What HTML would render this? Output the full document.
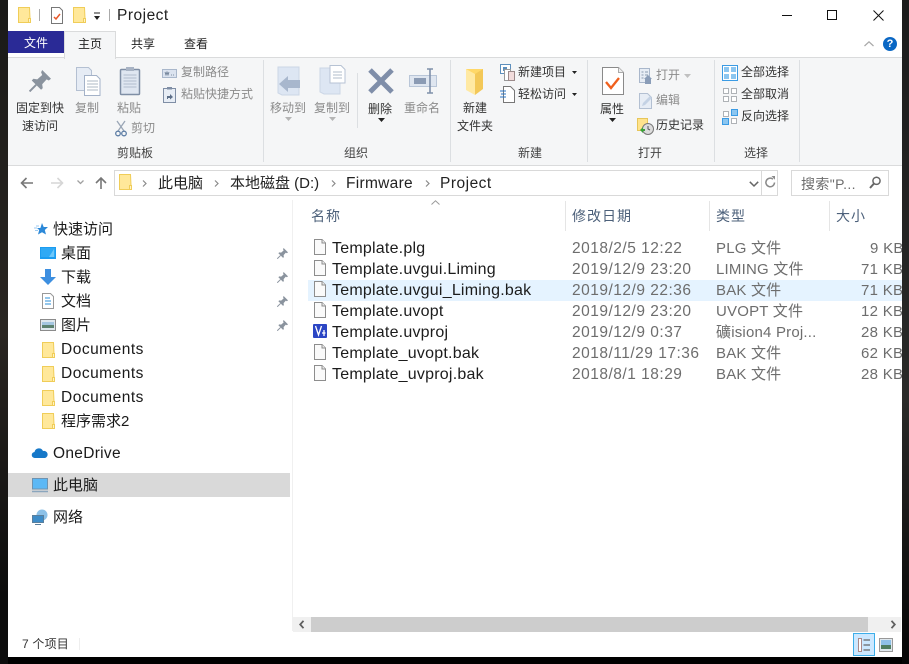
<!DOCTYPE html>
<html><head><meta charset="utf-8"><style>
*{box-sizing:border-box}
html,body{margin:0;padding:0;width:909px;height:664px;overflow:hidden;background:#000}
body{position:relative;font-family:"Liberation Sans","Noto Sans CJK SC",sans-serif;color:#222}
#bgl{position:absolute;left:0;top:0;width:8px;height:664px;background:linear-gradient(#1a1a18,#2a2622 50%,#0c0c0c 90%);z-index:10}
#bgr{position:absolute;right:0;top:0;width:7px;height:664px;background:linear-gradient(#1c1c1c,#2a2a28 60%,#050505);z-index:10}
#w{position:absolute;left:8px;top:0;width:894px;height:657px;background:#fff}
.a{position:absolute}
.t{position:absolute;white-space:nowrap;line-height:18px;font-size:12px}
.c{text-align:center}
.d{color:#8b8b8b}
.n{font-size:15px;color:#1a1a1a}
.l{font-size:15.5px;letter-spacing:.5px}
.f{font-size:16px;color:#1c1c1c;letter-spacing:.22px}
.g{font-size:15.5px;color:#6d6d6d;letter-spacing:.5px}
.y{font-size:15px;color:#6d6d6d;letter-spacing:.2px}
.z{font-size:15px;color:#6d6d6d;letter-spacing:.3px}
.h{font-size:14px;color:#4c607a;letter-spacing:1px}
.b{font-size:15px;color:#222}
svg{position:absolute;overflow:visible}
.sep{position:absolute;width:1px;background:#dcdfe2}
</style></head><body>
<div id="bgl"></div><div id="bgr"></div>
<div id="w"></div>
<svg width="0" height="0" style="position:absolute"><defs>
<symbol id="fo" viewBox="0 0 13 16"><path d="M.5.5h11l.5 11v4H.5z" fill="#ffe89a" stroke="#f0cd58"/><path d="M10.500 11.500h2v4h-2z" fill="#fff3c6" stroke="#f0cd58"/></symbol>
<symbol id="fi" viewBox="0 0 12 16"><path d="M.5.5h7.500l3.500 3.500v11.500H.5z" fill="#fafafa" stroke="#8d8d8d"/><path d="M8 .5v3.500h3.500" fill="#eee" stroke="#8d8d8d"/></symbol>
<symbol id="pin" viewBox="0 0 20 20"><path d="M12 0L20 8 18 9.500 16 8.500 12 13 12.500 16.500 11 18 2.500 9.500 4 8 7.500 8.500 12 4.500 11 2z" fill="#8a939e"/><path d="M6.500 13.500L.5 19.500" stroke="#8a939e" stroke-width="1.800"/></symbol>
</defs></svg>

<!-- title bar -->
<svg style="left:18px;top:7px" width="13" height="16"><use href="#fo"/></svg>
<div class="a" style="left:39px;top:9px;width:1px;height:12px;background:#aaa"></div>
<svg style="left:51px;top:7px" width="12" height="17"><path d="M.5.5h8l3 3v13H.5z" fill="#fff" stroke="#777"/><path d="M3 10l2 2 4-5" fill="none" stroke="#e8582a" stroke-width="1.500"/></svg>
<svg style="left:73px;top:7px" width="13" height="16"><use href="#fo"/></svg>
<svg style="left:93px;top:13px" width="8" height="8"><path d="M1 0h6" stroke="#222"/><path d="M1 3h6L4 7z" fill="#222"/></svg>
<div class="a" style="left:109px;top:9px;width:1px;height:12px;background:#aaa"></div>
<div class="t" style="left:117px;top:7px;font-size:15.500px;color:#222;letter-spacing:.5px">Project</div>
<div class="a" style="left:782px;top:15px;width:10px;height:1px;background:#111"></div>
<div class="a" style="left:827px;top:10px;width:10px;height:10px;border:1px solid #111"></div>
<svg style="left:873px;top:10px" width="11" height="11"><path d="M.5.5l10 10M10.500.5l-10 10" stroke="#111" fill="none"/></svg>

<!-- tabs -->
<div class="a" style="left:8px;top:31px;width:56px;height:22px;background:#2a2a96"></div>
<div class="t c" style="left:8px;top:34px;width:56px;color:#fff">文件</div>
<div class="a" style="left:64px;top:31px;width:52px;height:28px;background:#f5f6f7;border:1px solid #dadbdc;border-bottom:0;z-index:2"></div>
<div class="t c" style="left:64px;top:35px;width:52px;z-index:3">主页</div>
<div class="t" style="left:131px;top:35px">共享</div>
<div class="t" style="left:184px;top:35px">查看</div>
<svg style="left:864px;top:41px" width="10" height="6"><path d="M.5 5L5 .8 9.500 5" fill="none" stroke="#a8a8a8" stroke-width="1.200"/></svg>
<div class="a" style="left:883px;top:37px;width:14px;height:14px;border-radius:50%;background:#0a67c4;color:#fff;font:bold 11px/14px 'Liberation Sans',sans-serif;text-align:center">?</div>

<!-- ribbon -->
<div class="a" style="left:8px;top:57px;width:894px;height:109px;background:#f5f6f7;border-top:1px solid #dadbdc;border-bottom:1px solid #dadbdc"></div>
<div class="sep" style="left:263px;top:60px;height:102px"></div>
<div class="sep" style="left:357px;top:73px;height:55px"></div>
<div class="sep" style="left:450px;top:60px;height:102px"></div>
<div class="sep" style="left:587px;top:60px;height:102px"></div>
<div class="sep" style="left:714px;top:60px;height:102px"></div>
<div class="sep" style="left:799px;top:60px;height:102px"></div>

<svg style="left:29px;top:70px" width="22" height="22"><use href="#pin" width="22" height="22"/></svg>
<div class="t c" style="left:10px;top:99px;width:60px;color:#333">固定到快</div>
<div class="t c" style="left:10px;top:117px;width:60px;color:#333">速访问</div>

<svg style="left:76px;top:67px" width="25" height="29"><path d="M.5.5h12l3 3v20H.5z" fill="#e6ecf5" stroke="#b4c0d2"/><path d="M8.500 8.500h12l3.500 3.500v16.500H8.500z" fill="#fff" stroke="#a4b2c8"/><path d="M11 14h11M11 17h11M11 20h11M11 23h11" stroke="#aeb8c6"/></svg>
<div class="t c d" style="left:67px;top:99px;width:40px">复制</div>

<svg style="left:120px;top:66px" width="20" height="29"><rect x=".5" y="3.500" width="19" height="25" rx="1" fill="#dfe6f1" stroke="#7f8ea5" stroke-width="1.500"/><rect x="6" y="1" width="8" height="4" fill="#a8b3c4"/><path d="M3.500 9h13M3.500 12h13M3.500 15h13M3.500 18h13M3.500 21h13" stroke="#b0bccd"/></svg>
<div class="t c d" style="left:109px;top:99px;width:40px">粘贴</div>

<svg style="left:115px;top:121px" width="12" height="16"><path d="M2 0l7 10M10 0L3 10" stroke="#9aa6b6" stroke-width="1.300" fill="none"/><circle cx="3" cy="12.500" r="2.300" fill="none" stroke="#5f7fa6" stroke-width="1.300"/><circle cx="9" cy="12.500" r="2.300" fill="none" stroke="#5f7fa6" stroke-width="1.300"/></svg>
<div class="t d" style="left:131px;top:119px">剪切</div>

<svg style="left:162px;top:69px" width="15" height="9"><rect x=".5" y=".5" width="14" height="8" fill="#dbe3ef" stroke="#a9b7cb"/><path d="M3 3l1 3 1-3 1 3 1-3M9 6h1M11 6h1" stroke="#66788f" fill="none" stroke-width=".8"/></svg>
<div class="t d" style="left:181px;top:63px">复制路径</div>
<svg style="left:163px;top:87px" width="13" height="16"><rect x=".5" y="1.500" width="12" height="14" fill="#e7edf5" stroke="#7f8ea5"/><rect x="4" y="0" width="5" height="2.500" fill="#7f8ea5"/><path d="M4 12V9h3V7l3 3-3 2.500V11H5v1z" fill="#5d6f88"/></svg>
<div class="t d" style="left:181px;top:85px">粘贴快捷方式</div>
<div class="t c" style="left:105px;top:144px;width:60px;color:#444">剪贴板</div>

<svg style="left:278px;top:67px" width="23" height="29"><path d="M0 0h21v28H4L0 26z" fill="#dde6f3" stroke="#cbd6e6"/><path d="M1 17l9-8v4h12v8H10v4z" fill="#a8b7cd"/></svg>
<div class="t c d" style="left:263px;top:99px;width:50px">移动到</div>
<svg style="left:285px;top:117px" width="7" height="4"><path d="M0 0h7L3.500 4z" fill="#b5b5b5"/></svg>
<svg style="left:320px;top:65px" width="27" height="31"><path d="M0 3h20v26H4L0 27z" fill="#dde6f3" stroke="#cbd6e6"/><path d="M10 .5h11l4 4V18H10z" fill="#fff" stroke="#b7c3d4"/><path d="M13 7h9M13 10h9M13 13h9" stroke="#b2bccb"/></svg>
<div class="t c d" style="left:307px;top:99px;width:50px">复制到</div>
<svg style="left:329px;top:117px" width="7" height="4"><path d="M0 0h7L3.500 4z" fill="#b5b5b5"/></svg>

<svg style="left:368px;top:68px" width="26" height="26"><path d="M2 2l22 22M24 2L2 24" stroke="#7f8ea9" stroke-width="5" fill="none"/></svg>
<div class="t c" style="left:360px;top:100px;width:40px;color:#333">删除</div>
<svg style="left:378px;top:118px" width="7" height="4"><path d="M0 0h7L3.500 4z" fill="#222"/></svg>

<svg style="left:409px;top:68px" width="28" height="26"><rect x=".5" y="7.500" width="27" height="11" fill="#dfe6f0" stroke="#b9c6d8"/><rect x="5" y="10" width="12" height="6" fill="#8b9bb4"/><path d="M18 1h3v24h-3M24 1h-3M24 25h-3" stroke="#7f90aa" stroke-width="1.600" fill="none"/></svg>
<div class="t c d" style="left:397px;top:99px;width:50px">重命名</div>
<div class="t c" style="left:326px;top:144px;width:60px;color:#444">组织</div>

<svg style="left:465px;top:68px" width="19" height="28"><path d="M1 1l17 0v20H7z" fill="#ffd868"/><path d="M1 1l9 5v21l-9-5z" fill="#ffe9a3"/><path d="M10 6v21l8-6V1z" fill="#f3c858"/></svg>
<div class="t c" style="left:445px;top:99px;width:60px;color:#333">新建</div>
<div class="t c" style="left:445px;top:117px;width:60px;color:#333">文件夹</div>

<svg style="left:500px;top:64px" width="15" height="17"><rect x=".5" y=".5" width="10" height="9" fill="#fff" stroke="#5d8fbd"/><rect x="3" y="3" width="4" height="4" fill="#5d8fbd"/><rect x="4.500" y="5.500" width="6" height="11" fill="#fff" stroke="#999"/><rect x="8.500" y="7.500" width="6" height="9" fill="#f2dcdc" stroke="#9b8a8a"/></svg>
<div class="t" style="left:518px;top:63px;color:#333">新建项目</div>
<svg style="left:572px;top:71px" width="5" height="3"><path d="M0 0h5L2.500 3z" fill="#222"/></svg>
<svg style="left:500px;top:86px" width="15" height="17"><path d="M3.500.5h7l4 4v12h-11z" fill="#fff" stroke="#777"/><path d="M0 5h6M1 8h5M0 11h6" stroke="#2a74c4"/></svg>
<div class="t" style="left:518px;top:85px;color:#333">轻松访问</div>
<svg style="left:572px;top:93px" width="5" height="3"><path d="M0 0h5L2.500 3z" fill="#222"/></svg>
<div class="t" style="left:518px;top:144px;color:#444">新建</div>

<svg style="left:602px;top:67px" width="22" height="29"><path d="M.5.5h16l5 5v22H.5z" fill="#fff" stroke="#8a8a8a"/><path d="M16.500.5v5h5" fill="#eee" stroke="#aaa"/><path d="M4 15l5 6 8-10" fill="none" stroke="#f0601e" stroke-width="2.300"/></svg>
<div class="t c" style="left:592px;top:100px;width:40px;color:#333">属性</div>
<svg style="left:609px;top:118px" width="7" height="4"><path d="M0 0h7L3.500 4z" fill="#222"/></svg>

<svg style="left:639px;top:68px" width="14" height="16"><rect x=".5" y=".5" width="10" height="14" fill="#e7edf5" stroke="#a9b7cb"/><path d="M2.500 4h2M2.500 7h2M2.500 10h2M6 4h3M6 7h3" stroke="#8a9ab0"/><path d="M6 16v-5l-1 0 4-4 4 4h-1v5z" fill="#8a9db8"/></svg>
<div class="t d" style="left:656px;top:66px">打开</div>
<svg style="left:684px;top:74px" width="7" height="4"><path d="M0 0h7L3.500 4z" fill="#c0c0c0"/></svg>
<svg style="left:639px;top:93px" width="14" height="16"><path d="M.5.5h8l4 4v11H.5z" fill="#e7edf5" stroke="#b3c0d2"/><path d="M3 13l1-3 7-7 2 2-7 7z" fill="#c4d2e4"/></svg>
<div class="t d" style="left:656px;top:91px">编辑</div>
<svg style="left:637px;top:118px" width="17" height="17"><path d="M.5.5h10v12H.5z" fill="#ffe38c" stroke="#e7c65a"/><circle cx="11" cy="11" r="5.500" fill="#dcdcdc" stroke="#777"/><path d="M11 8v3l2 1" stroke="#555" fill="none"/><path d="M3 12l3-3v2h2v2H6v2z" fill="#3aa03a"/></svg>
<div class="t" style="left:656px;top:116px;color:#333">历史记录</div>
<div class="t" style="left:638px;top:144px;color:#444">打开</div>

<svg style="left:722px;top:65px" width="16" height="16"><rect x=".5" y=".5" width="15" height="15" fill="#fff" stroke="#3b9be4"/><path d="M2 2h5v5H2zM9 2h5v5H9zM2 9h5v5H2zM9 9h5v5H9z" fill="#8cc6f0"/></svg>
<div class="t" style="left:741px;top:63px;color:#333">全部选择</div>
<svg style="left:723px;top:88px" width="15" height="15"><path d="M.5.5h5v5h-5zM8.500.5h5v5h-5zM.5 8.500h5v5h-5zM8.500 8.500h5v5h-5z" fill="#fff" stroke="#aeb2b6"/></svg>
<div class="t" style="left:741px;top:85px;color:#333">全部取消</div>
<svg style="left:722px;top:109px" width="16" height="16"><path d="M9.500.5h6v6h-6zM.5 9.500h6v6h-6z" fill="#8cc6f0" stroke="#3b9be4"/><path d="M1.500 2.500h5v5h-5zM9.500 9.500h5v5h-5z" fill="#fff" stroke="#aeb2b6"/></svg>
<div class="t" style="left:741px;top:107px;color:#333">反向选择</div>
<div class="t" style="left:744px;top:144px;color:#444">选择</div>

<!-- nav bar -->
<svg style="left:20px;top:177px" width="14" height="12"><path d="M13 6H2M6.500 1L1.500 6l5 5" fill="none" stroke="#777" stroke-width="1.600"/></svg>
<svg style="left:50px;top:177px" width="14" height="12"><path d="M1 6h11M7.500 1l5 5-5 5" fill="none" stroke="#d6d6d6" stroke-width="1.600"/></svg>
<svg style="left:77px;top:180px" width="7" height="5"><path d="M.5.5L3.500 3.500 6.500.5" fill="none" stroke="#a0a0a0" stroke-width="1.300"/></svg>
<svg style="left:95px;top:176px" width="12" height="14"><path d="M6 13V2M1 7l5-5 5 5" fill="none" stroke="#777" stroke-width="1.600"/></svg>
<div class="a" style="left:114px;top:170px;width:664px;height:26px;border:1px solid #d9d9d9;background:#fff"></div>
<svg style="left:119px;top:174px" width="13" height="16"><use href="#fo"/></svg>
<svg style="left:142px;top:180px" width="5" height="7"><path d="M1 .5L4 3.500 1 6.500" fill="none" stroke="#8a8a8a" stroke-width="1.200"/></svg>
<div class="t b" style="left:158px;top:175px">此电脑</div>
<svg style="left:214px;top:180px" width="5" height="7"><path d="M1 .5L4 3.500 1 6.500" fill="none" stroke="#8a8a8a" stroke-width="1.200"/></svg>
<div class="t b" style="left:230px;top:175px">本地磁盘 (D:)</div>
<svg style="left:331px;top:180px" width="5" height="7"><path d="M1 .5L4 3.500 1 6.500" fill="none" stroke="#8a8a8a" stroke-width="1.200"/></svg>
<div class="t b" style="left:346px;top:175px;font-size:15.500px;letter-spacing:.3px">Firmware</div>
<svg style="left:425px;top:180px" width="5" height="7"><path d="M1 .5L4 3.500 1 6.500" fill="none" stroke="#8a8a8a" stroke-width="1.200"/></svg>
<div class="t b" style="left:440px;top:175px;font-size:15.500px;letter-spacing:.5px">Project</div>
<svg style="left:749px;top:181px" width="10" height="6"><path d="M.8.8L5 5 9.200.8" fill="none" stroke="#666" stroke-width="1.500"/></svg>
<div class="a" style="left:761px;top:171px;width:1px;height:24px;background:#d9d9d9"></div>
<svg style="left:765px;top:176px" width="11" height="13"><path d="M9.500 6.500a4.300 4.300 0 1 1-1.500-3.300" fill="none" stroke="#8a8a8a" stroke-width="1.500"/><path d="M6.500 0h3.500v3.800z" fill="#8a8a8a"/></svg>
<div class="a" style="left:791px;top:170px;width:98px;height:26px;border:1px solid #d9d9d9"></div>
<div class="t" style="left:801px;top:175px;font-size:14px;color:#6d6d6d;letter-spacing:.4px">搜索"P...</div>
<svg style="left:869px;top:176px" width="12" height="13"><circle cx="7.500" cy="4.800" r="3.600" fill="none" stroke="#666" stroke-width="1.500"/><path d="M5 7.500L1 12" stroke="#666" stroke-width="2"/></svg>

<!-- sidebar -->
<div class="sep" style="left:292px;top:200px;height:431px;background:#f0f0f0"></div>
<svg style="left:34px;top:222px" width="14" height="14"><path d="M8 1l1.700 4H14l-3.200 3 1.200 4.500L8 10.200 4 12.500 5.200 8 3 6h3.400z" fill="#2b88d8"/><path d="M0 6h3M1 8.500h3M2 4h3" stroke="#9ccaf0"/></svg>
<div class="t n" style="left:53px;top:221px">快速访问</div>
<svg style="left:40px;top:247px" width="16" height="13"><rect width="16" height="12" fill="#1c9cf0"/><rect x="1" y="1" width="14" height="9" fill="#2fa9f5"/><path d="M9 10l5-8v8z" fill="#6fc8fa"/></svg>
<div class="t n" style="left:61px;top:245px">桌面</div>
<svg style="left:40px;top:269px" width="16" height="17"><path d="M5 0h6v8h5l-8 8-8-8h5z" fill="#3d8fe0"/></svg>
<div class="t n" style="left:61px;top:269px">下载</div>
<svg style="left:42px;top:293px" width="12" height="16"><path d="M.5.5h8l3 3v12H.5z" fill="#fff" stroke="#999"/><path d="M3 5h5M3 8h6M3 11h6" stroke="#2a8fd8"/></svg>
<div class="t n" style="left:61px;top:293px">文档</div>
<svg style="left:40px;top:319px" width="16" height="12"><rect x=".5" y=".5" width="15" height="11" fill="#dfe8ee" stroke="#8b8b8b"/><path d="M2 3h12v3H2z" fill="#a4c6e0"/><path d="M2 6h12v3H2z" fill="#5c8270"/></svg>
<div class="t n" style="left:61px;top:317px">图片</div>
<svg style="left:277px;top:248px" width="11" height="11"><use href="#pin" width="11" height="11"/></svg>
<svg style="left:277px;top:272px" width="11" height="11"><use href="#pin" width="11" height="11"/></svg>
<svg style="left:277px;top:296px" width="11" height="11"><use href="#pin" width="11" height="11"/></svg>
<svg style="left:277px;top:320px" width="11" height="11"><use href="#pin" width="11" height="11"/></svg>

<svg style="left:42px;top:342px" width="13" height="16"><use href="#fo"/></svg>
<div class="t n l" style="left:61px;top:341px">Documents</div>
<svg style="left:42px;top:366px" width="13" height="16"><use href="#fo"/></svg>
<div class="t n l" style="left:61px;top:365px">Documents</div>
<svg style="left:42px;top:390px" width="13" height="16"><use href="#fo"/></svg>
<div class="t n l" style="left:61px;top:389px">Documents</div>
<svg style="left:42px;top:413px" width="13" height="16"><use href="#fo"/></svg>
<div class="t n" style="left:61px;top:413px">程序需求2</div>

<svg style="left:32px;top:447px" width="16" height="12"><path d="M3 11a3 3 0 0 1-.5-6A4.500 4.500 0 0 1 11 4a3.500 3.500 0 0 1 2 7z" fill="#1678c8"/></svg>
<div class="t n" style="left:53px;top:445px;font-size:15.500px;letter-spacing:.3px">OneDrive</div>
<div class="a" style="left:8px;top:473px;width:282px;height:24px;background:#d9d9d9"></div>
<svg style="left:32px;top:478px" width="16" height="15"><rect x=".5" y=".5" width="15" height="10.500" fill="#5cb8f5" stroke="#6f93b0"/><path d="M0 13.500h16" stroke="#8ba6bd" stroke-width="1.500"/></svg>
<div class="t n" style="left:53px;top:477px">此电脑</div>
<svg style="left:32px;top:509px" width="16" height="16"><circle cx="10" cy="6" r="5.500" fill="#8cc1e8"/><rect x=".5" y="6.500" width="11" height="7" fill="#3d8cc8" stroke="#5a7f9c"/><path d="M3 15.500h6" stroke="#5a7f9c"/></svg>
<div class="t n" style="left:53px;top:509px">网络</div>

<!-- headers -->
<svg style="left:431px;top:200px" width="9" height="5"><path d="M.5 4.500L4.500.8 8.500 4.500" fill="none" stroke="#999"/></svg>
<div class="t h" style="left:311px;top:207px">名称</div>
<div class="sep" style="left:565px;top:201px;height:30px;background:#e5e5e5"></div>
<div class="t h" style="left:572px;top:207px">修改日期</div>
<div class="sep" style="left:709px;top:201px;height:30px;background:#e5e5e5"></div>
<div class="t h" style="left:716px;top:207px">类型</div>
<div class="sep" style="left:829px;top:201px;height:30px;background:#e5e5e5"></div>
<div class="t h" style="left:836px;top:207px">大小</div>

<!-- rows -->
<div class="a" style="left:308px;top:280px;width:594px;height:21px;background:#e5f3ff"></div>
<svg style="left:314px;top:239px" width="12" height="16"><use href="#fi"/></svg>
<div class="t f" style="left:332px;top:240px">Template.plg</div>
<div class="t g" style="left:572px;top:240px">2018/2/5 12:22</div><div class="t y" style="left:716px;top:240px">PLG 文件</div><div class="t z" style="left:870px;top:240px">9 KB</div>
<svg style="left:314px;top:260px" width="12" height="16"><use href="#fi"/></svg>
<div class="t f" style="left:332px;top:261px">Template.uvgui.Liming</div>
<div class="t g" style="left:572px;top:261px">2019/12/9 23:20</div><div class="t y" style="left:716px;top:261px">LIMING 文件</div><div class="t z" style="left:861px;top:261px">71 KB</div>
<svg style="left:314px;top:281px" width="12" height="16"><use href="#fi"/></svg>
<div class="t f" style="left:332px;top:282px">Template.uvgui_Liming.bak</div>
<div class="t g" style="left:572px;top:282px">2019/12/9 22:36</div><div class="t y" style="left:716px;top:282px">BAK 文件</div><div class="t z" style="left:861px;top:282px">71 KB</div>
<svg style="left:314px;top:302px" width="12" height="16"><use href="#fi"/></svg>
<div class="t f" style="left:332px;top:303px">Template.uvopt</div>
<div class="t g" style="left:572px;top:303px">2019/12/9 23:20</div><div class="t y" style="left:716px;top:303px">UVOPT 文件</div><div class="t z" style="left:861px;top:303px">12 KB</div>
<svg style="left:313px;top:324px" width="14" height="14"><rect width="14" height="14" rx="1" fill="#2b45c4"/><path d="M2.500 2l3 9 3-9M9 9h3.500M11 6v6" stroke="#fff" stroke-width="1.300" fill="none"/></svg>
<div class="t f" style="left:332px;top:324px">Template.uvproj</div>
<div class="t g" style="left:572px;top:324px">2019/12/9 0:37</div><div class="t y" style="left:716px;top:324px">礦ision4 Proj...</div><div class="t z" style="left:861px;top:324px">28 KB</div>
<svg style="left:314px;top:344px" width="12" height="16"><use href="#fi"/></svg>
<div class="t f" style="left:332px;top:345px">Template_uvopt.bak</div>
<div class="t g" style="left:572px;top:345px">2018/11/29 17:36</div><div class="t y" style="left:716px;top:345px">BAK 文件</div><div class="t z" style="left:861px;top:345px">62 KB</div>
<svg style="left:314px;top:365px" width="12" height="16"><use href="#fi"/></svg>
<div class="t f" style="left:332px;top:366px">Template_uvproj.bak</div>
<div class="t g" style="left:572px;top:366px">2018/8/1 18:29</div><div class="t y" style="left:716px;top:366px">BAK 文件</div><div class="t z" style="left:861px;top:366px">28 KB</div>

<!-- scrollbar -->
<div class="a" style="left:293px;top:617px;width:608px;height:15px;background:#f0f0f0"></div>
<div class="a" style="left:311px;top:617px;width:557px;height:15px;background:#cdcdcd"></div>
<svg style="left:299px;top:620px" width="6" height="9"><path d="M4.500.8L1.200 4.500 4.500 8.200" fill="none" stroke="#606060" stroke-width="1.800"/></svg>
<svg style="left:890px;top:620px" width="6" height="9"><path d="M1.500.8L4.800 4.500 1.500 8.200" fill="none" stroke="#606060" stroke-width="1.800"/></svg>

<!-- status -->
<div class="t" style="left:22px;top:635px;color:#333;letter-spacing:.2px">7 个项目</div>
<div class="a" style="left:79px;top:638px;width:1px;height:12px;background:#eee"></div>
<div class="a" style="left:853px;top:633px;width:22px;height:23px;background:#cce8ff;border:1px solid #3daee9"></div>
<svg style="left:858px;top:638px" width="13" height="14"><path d="M.5.5h3v13h-3z" fill="#fff" stroke="#a88"/><path d="M5.500 2H12M5.500 7H12M5.500 12H12" stroke="#666" stroke-width="1.300"/></svg>
<svg style="left:879px;top:638px" width="14" height="14"><rect x=".5" y=".5" width="13" height="13" fill="#dfe8ee" stroke="#999"/><path d="M2 2h10v5H2z" fill="#8fc0e8"/><path d="M2 7h10v4H2z" fill="#4f7d60"/></svg>
</body></html>
